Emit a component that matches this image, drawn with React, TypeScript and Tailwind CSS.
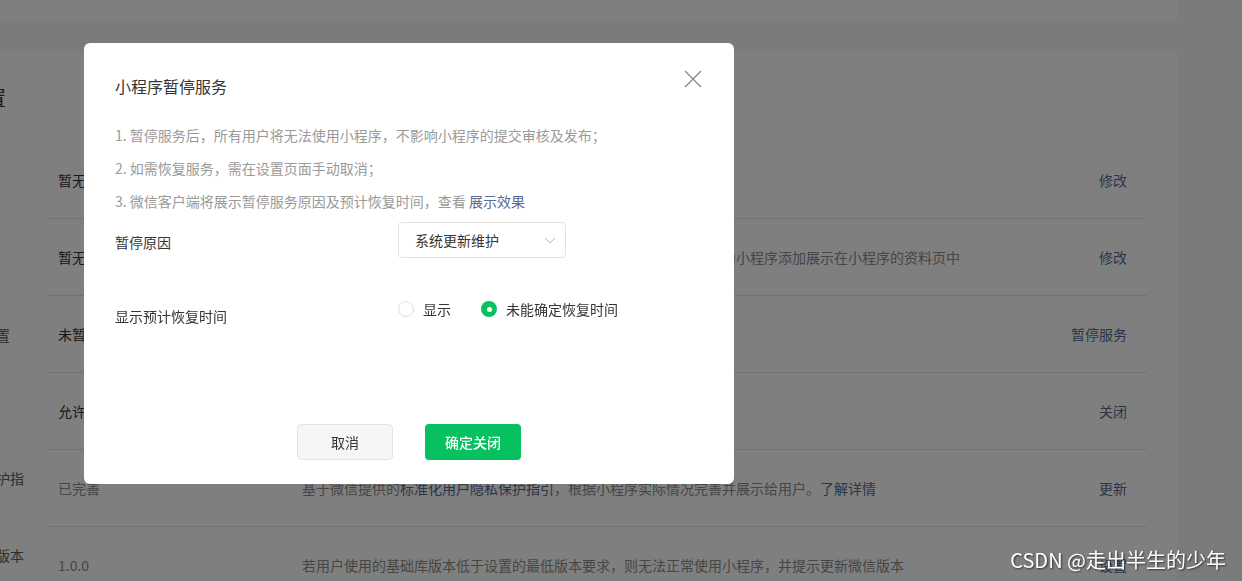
import { ReactNode } from "react";

type Row = {
  label: string;
  value: ReactNode;
  valueClass?: string;
  desc?: ReactNode;
  action: string;
};

const rows: Row[] = [
  { label: "服务类目", value: "暂无", action: "修改" },
  {
    label: "服务声明",
    value: "暂无",
    desc: "设置后的服务内容将在用户访问时进行展示，平台将会根据你的设置为小程序添加展示在小程序的资料页中",
    action: "修改",
  },
  { label: "服务状态设置", value: "未暂停服务", action: "暂停服务" },
  { label: "被搜索", value: "允许被搜索", action: "关闭" },
  {
    label: "用户隐私保护指引",
    value: "已完善",
    valueClass: "text-[#8c8c8c]",
    desc: (
      <>
        基于微信提供的<span className="text-[#576b95]">标准化用户隐私保护指引</span>
        ，根据小程序实际情况完善并展示给用户。<span className="text-[#576b95]">了解详情</span>
      </>
    ),
    action: "更新",
  },
  {
    label: "基础库最低版本设置",
    value: "1.0.0",
    valueClass: "text-[#8c8c8c]",
    desc: "若用户使用的基础库版本低于设置的最低版本要求，则无法正常使用小程序，并提示更新微信版本",
    action: "设置",
  },
];

export default function App() {
  return (
    <div className="w-[1242px] h-[581px] overflow-hidden bg-[#f6f6f6] font-['Noto_Sans_CJK_SC',sans-serif] relative">
      {/* Page behind the dialog */}
      <div className="-ml-[130px] w-[1307px] flex flex-col">
        <div className="h-[21px] bg-white rounded-b-[4px]" />

        <div className="mt-[30px] bg-white rounded-t-[4px] pl-[56px] pr-[30px] pt-[33px]">
          <h2 className="text-[20px] leading-[28px] text-[#353535]">功能设置</h2>

          <div className="mt-[30px] flex flex-col">
            {rows.map((row) => (
              <div key={row.label} className="flex">
                <div className="w-[98px] mr-[24px] flex items-center text-[14px] leading-[22px] text-[#5c5c5c]">
                  {row.label}
                </div>
                <div className="flex-1 h-[77px] flex items-center border-b border-[#e4e4e4] pl-[10px] pr-[20px] text-[14px]">
                  <div className={`w-[244px] ${row.valueClass ?? "text-[#353535]"}`}>{row.value}</div>
                  <div className="flex-1 text-[#8c8c8c] whitespace-nowrap">{row.desc}</div>
                  <div className="text-[#576b95]">{row.action}</div>
                </div>
              </div>
            ))}
          </div>
        </div>
      </div>

      {/* Mask */}
      <div className="fixed inset-0 bg-black/50" />

      {/* Dialog */}
      <div className="fixed left-[84px] top-[43px] w-[650px] h-[441px] bg-white rounded-[6px] flex flex-col pl-[31px] pt-[32px] pb-[24px]">
        <button className="absolute top-[27px] right-[32px] w-[18px] h-[18px]">
          <svg viewBox="0 0 18 18" className="w-[18px] h-[18px]" fill="none" stroke="#8a8a8a" strokeWidth={1.4}>
            <path d="M1 1L17 17M17 1L1 17" />
          </svg>
        </button>

        <h3 className="text-[16px] leading-[22px] text-[#353535]">小程序暂停服务</h3>

        <ul className="mt-[22px] text-[14px] leading-[33px] text-[#9a9a9a]">
          <li>1. 暂停服务后，所有用户将无法使用小程序，不影响小程序的提交审核及发布；</li>
          <li>2. 如需恢复服务，需在设置页面手动取消；</li>
          <li>
            3. 微信客户端将展示暂停服务原因及预计恢复时间，查看 <span className="text-[#576b95]">展示效果</span>
          </li>
        </ul>

        <div className="mt-[4px] flex items-start">
          <div className="w-[283px] mt-[9px] text-[14px] leading-[22px] text-[#353535]">暂停原因</div>
          <div className="w-[168px] h-[36px] border border-[#e2e2e2] rounded-[4px] flex items-center justify-between pl-[16px] pr-[9px] text-[14px] text-[#353535]">
            <span>系统更新维护</span>
            <svg viewBox="0 0 12 7" className="w-[12px] h-[7px]" fill="none" stroke="#b8b8b8" strokeWidth={1}>
              <path d="M1 1L6 6L11 1" />
            </svg>
          </div>
        </div>

        <div className="mt-[40px] flex items-start">
          <div className="w-[283px] mt-[7px] text-[14px] leading-[22px] text-[#353535]">显示预计恢复时间</div>
          <div className="flex items-center text-[14px] leading-[22px] text-[#353535]">
            <label className="flex items-center gap-[9px]">
              <span className="w-[16px] h-[16px] rounded-full border border-[#dcdcdc]" />
              <span>显示</span>
            </label>
            <label className="ml-[30px] flex items-center gap-[9px]">
              <span className="w-[16px] h-[16px] rounded-full bg-[#07c160] flex items-center justify-center">
                <span className="w-[5px] h-[5px] rounded-full bg-white" />
              </span>
              <span>未能确定恢复时间</span>
            </label>
          </div>
        </div>

        <div className="mt-auto flex justify-center gap-[32px] pr-[31px]">
          <button className="w-[96px] h-[36px] rounded-[4px] bg-[#f5f6f7] border border-[#e2e4e6] text-[14px] text-[#353535]">
            取消
          </button>
          <button className="w-[96px] h-[36px] rounded-[4px] bg-[#07c160] text-[14px] font-medium text-white">
            确定关闭
          </button>
        </div>
      </div>

      {/* Watermark */}
      <div className="fixed right-[16px] bottom-[7px] text-[20px] leading-[28px] text-white [text-shadow:1px_1px_2px_rgba(0,0,0,0.6)]">
        CSDN @走出半生的少年
      </div>
    </div>
  );
}
